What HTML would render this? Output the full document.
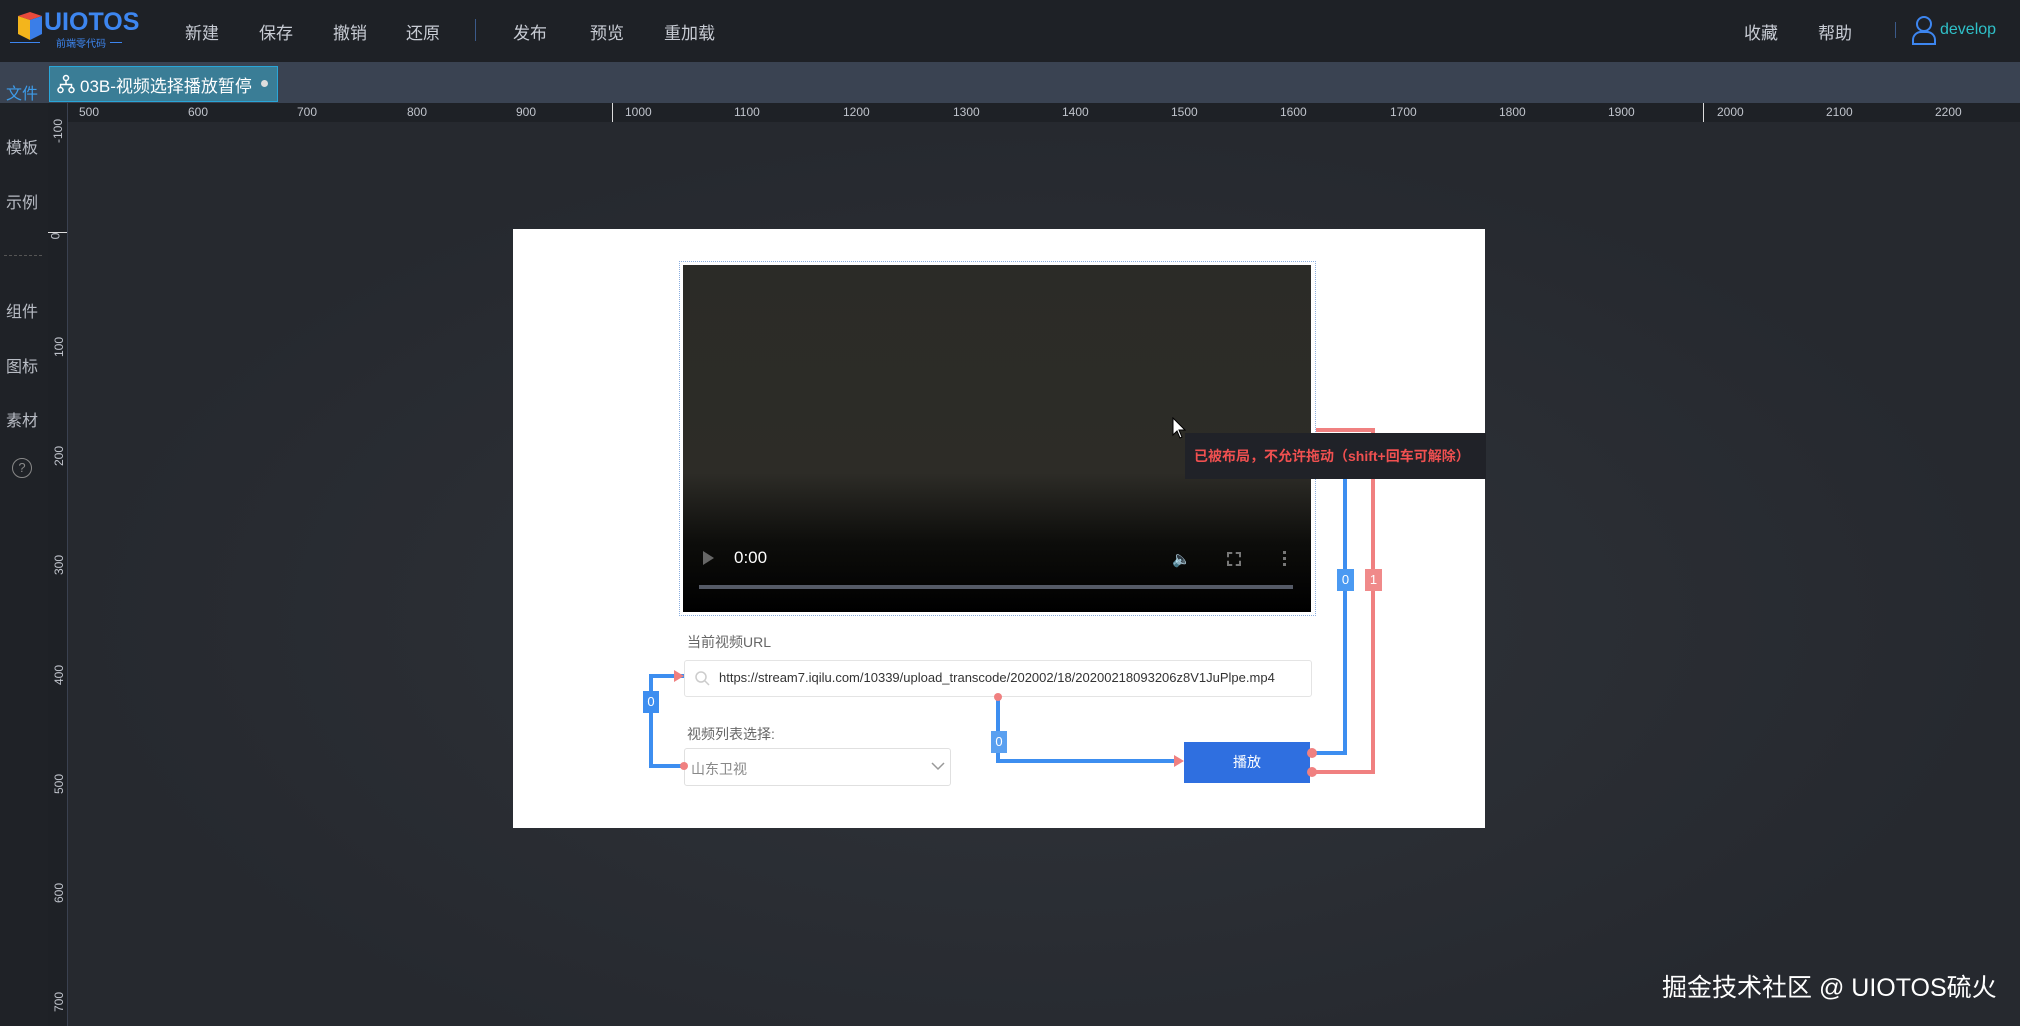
<!DOCTYPE html>
<html><head><meta charset="utf-8"><style>
*{margin:0;padding:0;box-sizing:border-box}
body{width:2020px;height:1026px;overflow:hidden;background:#26292f;font-family:"Liberation Sans","Noto Sans CJK SC",sans-serif;position:relative}
.a{position:absolute}
.top{left:0;top:0;width:2020px;height:62px;background:#1e2126}
.nav{top:19px;font-size:17px;color:#c8ccd4}
.tabbar{left:0;top:62px;width:2020px;height:41px;background:#3a4352}
.side{left:0;top:103px;width:48px;height:923px;background:#1f2227}
.sitem{left:6px;font-size:16px;color:#b8bcc4}
.hr{left:48px;top:103px;width:1972px;height:19px;background:#1e2126}
.vr{left:48px;top:122px;width:19px;height:904px;background:#1e2126}
.hl{font-size:12px;color:#c0c4cc;top:105px}
.vl{font-size:12px;color:#c0c4cc;left:46px;transform:rotate(-90deg);transform-origin:center}
.main{left:67px;top:122px;width:1953px;height:904px;background:radial-gradient(ellipse at 50% 55%,#30343a 0%,#26292f 70%)}
.canvas{left:513px;top:229px;width:972px;height:599px;background:#fff}
.lbl{font-size:14px;color:#666}
.box{background:#2f6fe0;color:#fff;font-size:14px;text-align:center}
</style></head><body>
<div class="a top"></div>
<!-- logo -->
<svg class="a" style="left:14px;top:10px" width="32" height="32" viewBox="0 0 32 32"><polygon points="4,6 16,2 28,6 16,10" fill="#e84a3c"/><polygon points="4,6 16,10 16,30 4,24" fill="#f3b51c"/><polygon points="16,10 28,6 28,24 16,30" fill="#3a7ee8"/></svg>
<div class="a" style="left:44px;top:8px;font-size:25px;font-weight:bold;color:#3d86f0;letter-spacing:0px">UIOTOS</div>
<div class="a" style="left:56px;top:35px;font-size:10px;color:#3d86f0">前端零代码</div>
<div class="a" style="left:10px;top:42px;width:30px;height:1px;background:#3d86f0"></div>
<div class="a" style="left:110px;top:42px;width:12px;height:1px;background:#3d86f0"></div>
<div class="a nav" style="left:185px">新建</div>
<div class="a nav" style="left:259px">保存</div>
<div class="a nav" style="left:333px">撤销</div>
<div class="a nav" style="left:406px">还原</div>
<div class="a" style="left:475px;top:19px;width:1px;height:22px;background:#3b5a8a"></div>
<div class="a nav" style="left:513px">发布</div>
<div class="a nav" style="left:590px">预览</div>
<div class="a nav" style="left:664px">重加载</div>
<div class="a nav" style="left:1744px">收藏</div>
<div class="a nav" style="left:1818px">帮助</div>
<div class="a" style="left:1895px;top:22px;width:1px;height:16px;background:#3b5a8a"></div>
<svg class="a" style="left:1911px;top:15px" width="26" height="30" viewBox="0 0 26 30" fill="none" stroke="#3d86f0" stroke-width="2"><circle cx="13" cy="9" r="7"/><path d="M2 29 v-4 a8 8 0 0 1 8-8 h6 a8 8 0 0 1 8 8 v4 z"/></svg>
<div class="a" style="left:1940px;top:21px;font-size:16px;color:#2fc0c8">develop</div>

<div class="a tabbar"></div>
<div class="a" style="left:6px;top:80px;font-size:16px;color:#3d9be8">文件</div>
<div class="a" style="left:49px;top:66px;width:229px;height:36px;background:#3a7d96;border:1px solid #2aa6d8"></div>
<svg class="a" style="left:57px;top:74px" width="18" height="20" viewBox="0 0 18 20" fill="none" stroke="#fff" stroke-width="1.5"><circle cx="9" cy="4" r="2.5"/><circle cx="3.5" cy="16" r="2.5"/><circle cx="14.5" cy="16" r="2.5"/><path d="M9 6.5v4M3.5 13.5v-3h11v3"/></svg>
<div class="a" style="left:80px;top:72px;font-size:17px;color:#fff">03B-视频选择播放暂停</div>
<div class="a" style="left:261px;top:80px;width:7px;height:7px;border-radius:50%;background:#ddd"></div>

<div class="a side"></div>
<div class="a sitem" style="top:134px">模板</div>
<div class="a sitem" style="top:189px">示例</div>
<div class="a" style="left:4px;top:255px;width:38px;border-top:1px dashed #555"></div>
<div class="a sitem" style="top:298px">组件</div>
<div class="a sitem" style="top:353px">图标</div>
<div class="a sitem" style="top:407px">素材</div>
<div class="a" style="left:12px;top:458px;width:20px;height:20px;border:1.5px solid #888;border-radius:50%;color:#888;font-size:13px;text-align:center;line-height:17px">?</div>

<div class="a main"></div>
<div class="a hr"></div>
<div class="a vr"></div>
<div class="a" style="left:67px;top:103px;width:1px;height:923px;background:#3a4150"></div>
<!-- h ruler labels -->
<div class="a hl" style="left:79px">500</div><div class="a hl" style="left:188px">600</div><div class="a hl" style="left:297px">700</div><div class="a hl" style="left:407px">800</div><div class="a hl" style="left:516px">900</div><div class="a hl" style="left:625px">1000</div><div class="a hl" style="left:734px">1100</div><div class="a hl" style="left:843px">1200</div><div class="a hl" style="left:953px">1300</div><div class="a hl" style="left:1062px">1400</div><div class="a hl" style="left:1171px">1500</div><div class="a hl" style="left:1280px">1600</div><div class="a hl" style="left:1390px">1700</div><div class="a hl" style="left:1499px">1800</div><div class="a hl" style="left:1608px">1900</div><div class="a hl" style="left:1717px">2000</div><div class="a hl" style="left:1826px">2100</div><div class="a hl" style="left:1935px">2200</div>
<div class="a" style="left:612px;top:103px;width:1px;height:19px;background:#ddd"></div>
<div class="a" style="left:1703px;top:103px;width:1px;height:19px;background:#ddd"></div>
<!-- v ruler labels -->
<div class="a vl" style="top:124px">-100</div><div class="a vl" style="top:229px;left:52px">0</div><div class="a vl" style="top:340px;left:49px">100</div><div class="a vl" style="top:449px;left:49px">200</div><div class="a vl" style="top:558px;left:49px">300</div><div class="a vl" style="top:668px;left:49px">400</div><div class="a vl" style="top:777px;left:49px">500</div><div class="a vl" style="top:886px;left:49px">600</div><div class="a vl" style="top:995px;left:49px">700</div>
<div class="a" style="left:48px;top:232px;width:19px;height:1px;background:#ddd"></div>

<div class="a canvas"></div>
<div class="a" style="left:679px;top:261px;width:637px;height:355px;border:1px dotted #8aaee0"></div>
<div class="a" style="left:683px;top:265px;width:628px;height:347px;background:linear-gradient(#2b2b27 0%,#2d2c27 60%,#0d0d0b 80%,#000 100%)"></div>
<div class="a" style="left:703px;top:551px;width:0;height:0;border-left:11px solid #666;border-top:7px solid transparent;border-bottom:7px solid transparent"></div>
<div class="a" style="left:734px;top:548px;font-size:17px;color:#fff">0:00</div>
<div class="a" style="left:1172px;top:550px;font-size:15px;color:#777">🔈</div>
<div class="a" style="left:1227px;top:552px;width:14px;height:14px;border:2px dashed #777"></div>
<div class="a" style="left:1283px;top:551px;width:3px;height:16px;background:repeating-linear-gradient(#777 0 3px,transparent 3px 6px)"></div>
<div class="a" style="left:699px;top:585px;width:594px;height:4px;background:#555a66"></div>

<div class="a lbl" style="left:687px;top:632px">当前视频URL</div>
<div class="a" style="left:684px;top:660px;width:628px;height:37px;border:1px solid #e4e4e4;border-radius:3px"></div>
<svg class="a" style="left:694px;top:670px" width="16" height="16" viewBox="0 0 16 16" fill="none" stroke="#ccc" stroke-width="1.5"><circle cx="7" cy="7" r="5"/><path d="M11 11l4 4"/></svg>
<div class="a" style="left:719px;top:670px;font-size:13px;color:#333">https://stream7.iqilu.com/10339/upload_transcode/202002/18/20200218093206z8V1JuPlpe.mp4</div>
<div class="a lbl" style="left:687px;top:724px">视频列表选择:</div>
<div class="a" style="left:684px;top:748px;width:267px;height:38px;border:1px solid #e0e0e0;border-radius:3px"></div>
<div class="a" style="left:691px;top:759px;font-size:14px;color:#888">山东卫视</div>
<svg class="a" style="left:931px;top:761px" width="14" height="10" viewBox="0 0 14 10" fill="none" stroke="#999" stroke-width="1.5"><path d="M1 2l6 6 6-6"/></svg>
<div class="a box" style="left:1184px;top:742px;width:126px;height:41px;line-height:41px">播放</div>

<!-- wires -->
<svg class="a" style="left:0;top:0" width="2020" height="1026" fill="none" stroke-width="4">
<path d="M684 676 H651 V766 H684" stroke="#3d8ef0"/>
<path d="M998 696 V761 H1180" stroke="#3d8ef0"/>
<path d="M1345 479 V753 H1312" stroke="#3d8ef0"/>
<path d="M1316 430 H1373 V772 H1312" stroke="#f08080"/>
<polygon points="674,670 684,676 674,682" fill="#f08080" stroke="none"/>
<polygon points="1174,755 1184,761 1174,767" fill="#f08080" stroke="none"/>
<circle cx="684" cy="766" r="4" fill="#f08080" stroke="none"/>
<circle cx="998" cy="697" r="4" fill="#f08080" stroke="none"/>
<circle cx="1312" cy="753" r="5" fill="#f08080" stroke="none"/>
<circle cx="1312" cy="772" r="5" fill="#f08080" stroke="none"/>
</svg>
<div class="a box" style="left:643px;top:691px;width:16px;height:22px;background:#3d8ef0;font-size:13px;line-height:22px">0</div>
<div class="a box" style="left:991px;top:731px;width:16px;height:22px;background:#5aa0f0;font-size:13px;line-height:22px">0</div>
<div class="a box" style="left:1337px;top:569px;width:17px;height:22px;background:#4b9af2;font-size:13px;line-height:22px">0</div>
<div class="a box" style="left:1365px;top:569px;width:17px;height:22px;background:#f08a8a;font-size:13px;line-height:22px">1</div>

<div class="a" style="left:1185px;top:433px;width:301px;height:46px;background:#202228"></div>
<div class="a" style="left:1194px;top:446px;font-size:14px;font-weight:bold;color:#f05050">已被布局，不允许拖动（shift+回车可解除）</div>
<svg class="a" style="left:1172px;top:417px" width="14" height="22" viewBox="0 0 14 22"><path d="M1 1 V18 L5 14 L8 21 L10 20 L7 13 H13 Z" fill="#fff" stroke="#000" stroke-width="1"/></svg>

<div class="a" style="left:1662px;top:968px;font-size:25px;color:#fff">掘金技术社区 @ UIOTOS硫火</div>
</body></html>
